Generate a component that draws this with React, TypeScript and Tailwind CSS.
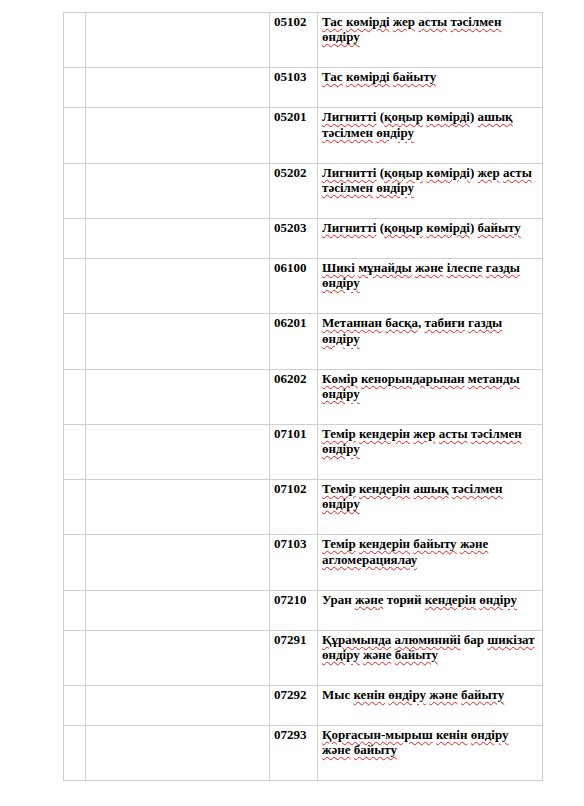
const PLAIN = new Set(["Уран", "торий", "бар", "Мыс"]);

type Row = { code: string; lines: string[] };

const rows: Row[] = [
  { code: "05102", lines: ["Тас көмірді жер асты тәсілмен", "өндіру"] },
  { code: "05103", lines: ["Тас көмірді байыту"] },
  { code: "05201", lines: ["Лигнитті (қоңыр көмірді) ашық", "тәсілмен өндіру"] },
  { code: "05202", lines: ["Лигнитті (қоңыр көмірді) жер асты", "тәсілмен өндіру"] },
  { code: "05203", lines: ["Лигнитті (қоңыр көмірді) байыту"] },
  { code: "06100", lines: ["Шикі мұнайды және ілеспе газды", "өндіру"] },
  { code: "06201", lines: ["Метаннан басқа, табиғи газды", "өндіру"] },
  { code: "06202", lines: ["Көмір кенорындарынан метанды", "өндіру"] },
  { code: "07101", lines: ["Темір кендерін жер асты тәсілмен", "өндіру"] },
  { code: "07102", lines: ["Темір кендерін ашық тәсілмен", "өндіру"] },
  { code: "07103", lines: ["Темір кендерін байыту және", "агломерациялау"] },
  { code: "07210", lines: ["Уран және торий кендерін өндіру"] },
  { code: "07291", lines: ["Құрамында алюминийі бар шикізат", "өндіру және байыту"] },
  { code: "07292", lines: ["Мыс кенін өндіру және байыту"] },
  { code: "07293", lines: ["Қорғасын-мырыш кенін өндіру", "және байыту"] },
];

function Word({ w }: { w: string }) {
  const m = w.match(/^([(]*)(.*?)([),.]*)$/);
  const pre = m ? m[1] : "";
  const core = m ? m[2] : w;
  const post = m ? m[3] : "";
  if (PLAIN.has(core)) return <span>{w}</span>;
  return (
    <span>
      {pre}
      <span className="underline decoration-wavy decoration-[#e81c1c] decoration-1 underline-offset-[2px]">{core}</span>
      {post}
    </span>
  );
}

function Line({ text }: { text: string }) {
  const words = text.split(" ");
  return (
    <div className="whitespace-nowrap">
      {words.map((w, i) => (
        <span key={i}>
          {i > 0 && " "}
          <Word w={w} />
        </span>
      ))}
    </div>
  );
}

function TableRow({ code, lines }: Row) {
  return (
    <div className="flex border-b border-[#d0d0d0]">
      <div className="w-[23px] shrink-0 border-x border-[#d0d0d0]" />
      <div className="w-[184px] shrink-0 border-r border-[#d0d0d0]" />
      <div className="w-[48px] shrink-0 border-r border-[#d0d0d0] pl-[4px] pt-[1px] pb-[22.67px]">{code}</div>
      <div className="w-[225px] shrink-0 border-r border-[#d0d0d0] pl-[4px] pt-[1px] pb-[22.67px]">
        {lines.map((l, i) => (
          <Line key={i} text={l} />
        ))}
      </div>
    </div>
  );
}

export default function App() {
  return (
    <div
      className="w-[584px] h-[806px] bg-white pt-[12px] pl-[63px] text-black font-bold text-[13px] leading-[15.33px]"
      style={{ fontFamily: '"Liberation Serif", "Times New Roman", serif' }}
    >
      <div className="w-[480px] border-t border-[#d0d0d0]">
        {rows.map((r) => (
          <TableRow key={r.code} {...r} />
        ))}
      </div>
    </div>
  );
}
